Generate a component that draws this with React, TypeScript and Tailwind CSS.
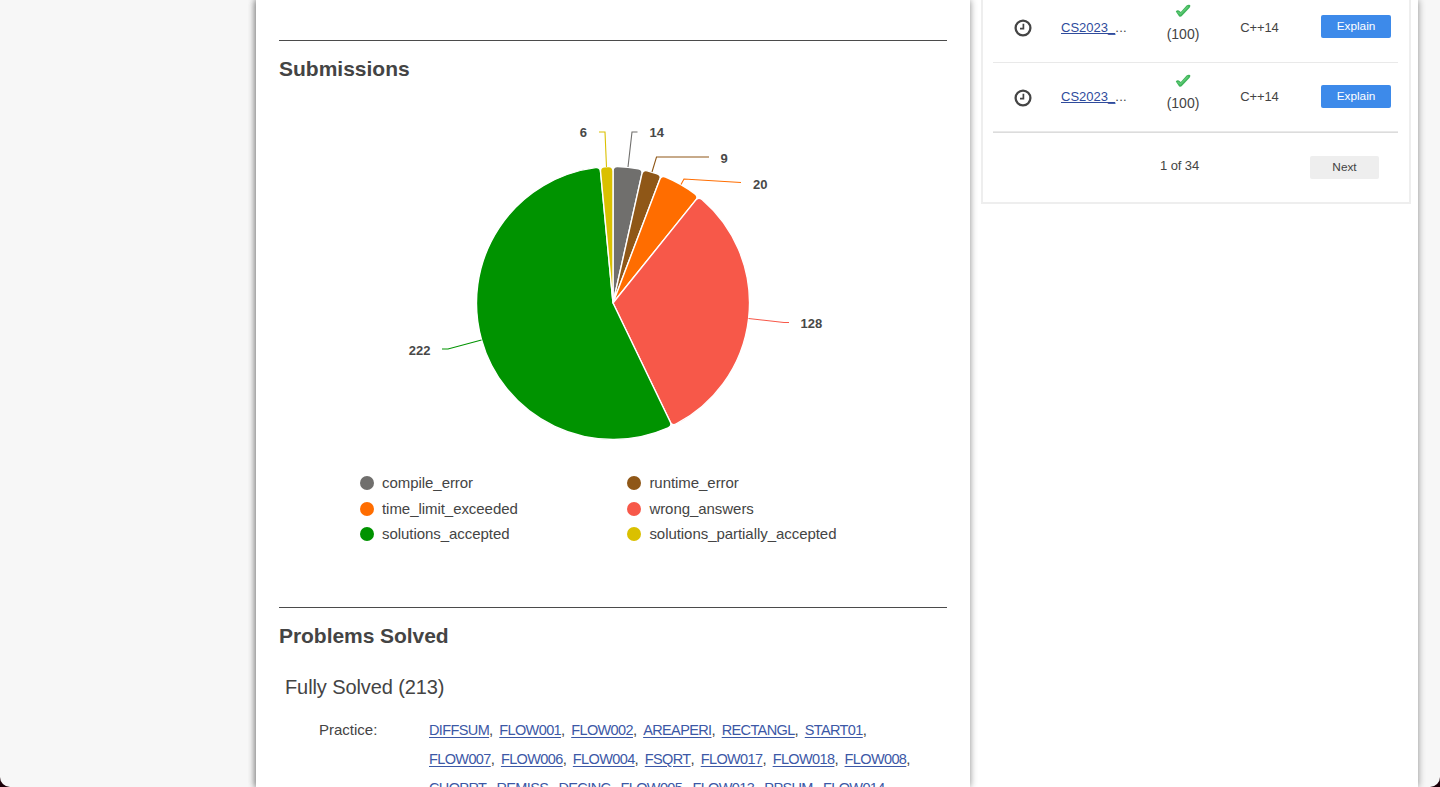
import React from "react";

const slices = [
  { n: 14, color: "#706f6d", name: "compile_error", line: "M628 167 L632 132 L637.5 132", tx: 649.5, ty: 137, anchor: "start" },
  { n: 9, color: "#8f5717", name: "runtime_error", line: "M652 172 L656.5 157 L709 157", tx: 720.5, ty: 163, anchor: "start" },
  { n: 20, color: "#ff6d00", name: "time_limit_exceeded", line: "M681 184.5 L684 179 L741 182.5", tx: 753, ty: 189, anchor: "start" },
  { n: 128, color: "#f75849", name: "wrong_answers", line: "M748.5 318.5 L784 322.5 L789 322.5", tx: 800.5, ty: 328, anchor: "start" },
  { n: 222, color: "#009300", name: "solutions_accepted", line: "M481.5 340 L448 349 L442 349", tx: 430.5, ty: 355, anchor: "end" },
  { n: 6, color: "#dac000", name: "solutions_partially_accepted", line: "M606.5 167 L605 132 L599 132", tx: 587, ty: 137, anchor: "end" },
] as const;

const CX = 613;
const CY = 303;
const R = 136.5;
const CORNER = 4.5;

function point(angle: number, radius: number) {
  return `${(CX + Math.sin(angle) * radius).toFixed(2)} ${(CY - Math.cos(angle) * radius).toFixed(2)}`;
}

function slicePath(a: number, b: number) {
  const d = CORNER / R;
  const large = b - a > Math.PI ? 1 : 0;
  return `M${CX} ${CY} L${point(a, R - CORNER)} Q${point(a, R)} ${point(a + d, R)} A${R} ${R} 0 ${large} 1 ${point(b - d, R)} Q${point(b, R)} ${point(b, R - CORNER)} Z`;
}

function Pie() {
  const total = slices.reduce((s, x) => s + x.n, 0);
  let sum = 0;
  return (
    <svg className="block" width="668" height="360" viewBox="279 95 668 360">
      {slices.map((s) => {
        const a = (sum / total) * Math.PI * 2;
        sum += s.n;
        const b = (sum / total) * Math.PI * 2;
        return (
          <g key={s.name}>
            <path d={slicePath(a, b)} fill={s.color} stroke="#fff" strokeWidth="1.4" strokeLinejoin="round" />
            <path d={s.line} fill="none" stroke={s.color} strokeWidth="1.1" />
            <text x={s.tx} y={s.ty} textAnchor={s.anchor} fontSize="13" fontWeight="700" fill="#484848">
              {s.n}
            </text>
          </g>
        );
      })}
    </svg>
  );
}

const problems = [
  ["DIFFSUM", "FLOW001", "FLOW002", "AREAPERI", "RECTANGL", "START01"],
  ["FLOW007", "FLOW006", "FLOW004", "FSQRT", "FLOW017", "FLOW018", "FLOW008"],
  ["CHOPRT", "REMISS", "DECINC", "FLOW005", "FLOW013", "PPSUM", "FLOW014"],
];

function SubmissionRow() {
  return (
    <div className="flex h-[69.5px] items-start border-b border-[#e9e9e9]">
      <div className="flex w-[60px] justify-center pt-[26px]">
        <svg width="18" height="18" viewBox="0 0 18 18" fill="none" stroke="#444" className="block">
          <circle cx="9" cy="9" r="7.4" strokeWidth="2.3" />
          <path d="M9.4 4.8V9.6H6" strokeWidth="1.7" />
        </svg>
      </div>
      <div className="w-[91px] pl-[8px] pt-[25.5px] text-[13px] leading-[18px]">
        <a className="text-[#2f4b9c] underline underline-offset-1 [text-decoration-skip-ink:none]">CS2023_</a>
        <span className="tracking-[0.3px]">...</span>
      </div>
      <div className="flex w-[78px] flex-col items-center pt-[11px]">
        <svg width="16" height="14" viewBox="0 0 16 14" className="block">
          <path d="M.8 7.6 Q2 5.8 3.9 6.6 L5.8 8 L11.6 1.4 Q13.4 .2 15.2 1 Q15.6 2.4 14.6 3.8 L6.6 12.3 Q5.2 13.2 4 12.2 Z" fill="#3fb45a" />
          <path d="M2.6 8.2 L5.4 10 L13.2 2.4" fill="none" stroke="#5cc873" strokeWidth="1.6" />
        </svg>
        <span className="mt-[6.5px] text-[14px] leading-[18px]">(100)</span>
      </div>
      <div className="w-[75px] pt-[25.5px] text-center text-[13px] leading-[18px] tracking-[-0.1px]">C++14</div>
      <div className="ml-[24px] mt-[22px] h-[23px] w-[70px] shrink-0 rounded-[2px] bg-[#3d8aea] text-center text-[11.8px] leading-[22px] text-white">Explain</div>
    </div>
  );
}

export default function App() {
  return (
    <div className="h-[787px] w-[1440px] overflow-hidden bg-[#1c0009] font-['Liberation_Sans',Arial,sans-serif] text-[#444]">
      <div className="flex h-full overflow-hidden rounded-b-[10px] bg-[#f7f7f7] pl-[256px]">
        <div className="flex h-full w-[1162px] bg-white shadow-[0_0_7px_#888]">
          <main className="h-full w-[714px] shrink-0 overflow-hidden px-[23px] pt-[40px] shadow-[0_0_7px_#888]">
            <section className="h-[567px] border-t border-[#4b4b4b]">
              <h2 className="h-[54px] pt-[15px] text-[21px] font-bold leading-[26px]">Submissions</h2>
              <Pie />
              <div className="grid w-[560px] grid-cols-[267.4px_1fr] pl-[81px] pt-[15px]">
                {slices.map((s) => (
                  <div key={s.name} className="flex h-[25.7px] items-center gap-[8px] text-[15px] leading-[26px] tracking-[-0.05px]">
                    <svg width="14" height="14" className="block shrink-0">
                      <circle cx="7" cy="7" r="7" fill={s.color} />
                    </svg>
                    <span>{s.name}</span>
                  </div>
                ))}
              </div>
            </section>
            <section className="border-t border-[#4b4b4b]">
              <h2 className="pt-[15px] text-[21px] font-bold leading-[26px] tracking-[-0.05px]">Problems Solved</h2>
              <h3 className="pl-[6px] pt-[25px] text-[20px] leading-[26px] tracking-[-0.1px]">Fully Solved (213)</h3>
              <div className="flex pl-[40px] pt-[15px]">
                <div className="w-[110px] shrink-0 pt-[5px] text-[15px] leading-[20px]">Practice:</div>
                <div className="text-[15px] leading-[29px]">
                  {problems.map((row, i) => (
                    <div key={i} className="flex h-[29px] gap-[6px] whitespace-nowrap">
                      {row.map((p) => (
                        <span key={p}>
                          <a className="text-[14.5px] tracking-[-0.62px] text-[#3c58a6] underline underline-offset-2">{p}</a>,
                        </span>
                      ))}
                    </div>
                  ))}
                </div>
              </div>
            </section>
          </main>
          <aside className="w-[448px] pl-[11px]">
            <div className="h-[204px] w-[430px] overflow-hidden border-x-2 border-b-2 border-[#eee] pl-[10px] pr-[11px]">
              <div className="-mt-[7px] border-b border-[#dcdcdc]">
                <SubmissionRow />
                <SubmissionRow />
              </div>
              <div className="flex pt-[23px]">
                <div className="w-[317px] pl-[167px] pt-[1px] text-[13px] leading-[18px] tracking-[-0.1px]">1 of 34</div>
                <div className="h-[23px] w-[69px] shrink-0 rounded-[2px] bg-[#eee] text-center text-[11.8px] leading-[22px]">Next</div>
              </div>
            </div>
          </aside>
        </div>
      </div>
    </div>
  );
}
